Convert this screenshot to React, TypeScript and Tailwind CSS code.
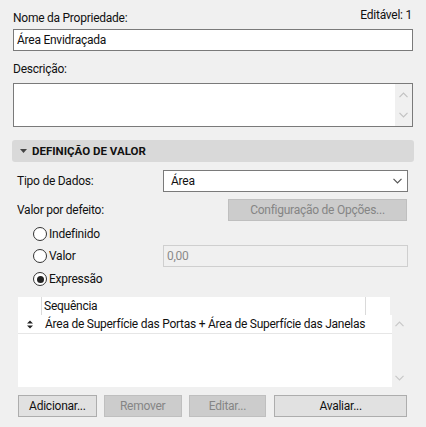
import React from "react";

const Chevron = ({ dir, color, className }: { dir: "up" | "down"; color: string; className?: string }) => (
  <svg width="9" height="6" viewBox="0 0 9 6" className={className}>
    {dir === "down" ? (
      <path d="M0.5 0.8 L4.5 4.8 L8.5 0.8" fill="none" stroke={color} strokeWidth="1.2" />
    ) : (
      <path d="M0.5 5.2 L4.5 1.2 L8.5 5.2" fill="none" stroke={color} strokeWidth="1.2" />
    )}
  </svg>
);

const Radio = ({ checked, label }: { checked?: boolean; label: string }) => (
  <div className="flex items-center gap-[2px]">
    <div className="w-[14px] h-[14px] rounded-full border border-[#333333] bg-white flex items-center justify-center">
      {checked && <div className="w-[7px] h-[7px] rounded-full bg-[#222222]" />}
    </div>
    <span>{label}</span>
  </div>
);

const Btn = ({ label, disabled, className }: { label: string; disabled?: boolean; className?: string }) => (
  <div
    className={
      "h-[22px] flex items-center justify-center border " +
      (disabled
        ? "bg-[#cccccc] border-[#bfbfbf] text-[#858585] "
        : "bg-[#e1e1e1] border-[#adadad] text-[#111111] ") +
      (className ?? "")
    }
  >
    {label}
  </div>
);

export default function App() {
  return (
    <div
      className="w-[426px] h-[427px] bg-[#f0f0f0] text-[12px] leading-[16px] tracking-[-0.25px] text-[#111111] overflow-hidden"
      style={{ fontFamily: "Roboto, 'Noto Sans', sans-serif" }}
    >
      <div className="px-[13px] pt-[7px]">
        <div className="flex justify-between items-start">
          <span className="mt-[3px]">Nome da Propriedade:</span>
          <span className="mr-[1px]">Editável: 1</span>
        </div>
        <div className="mt-[3px] h-[22px] bg-white border border-[#7a7a7a] flex items-center pl-[3px]">
          Área Envidraçada
        </div>
        <div className="mt-[10px]">Descrição:</div>
        <div className="mt-[6px] h-[44px] bg-white border border-[#7a7a7a] flex justify-end">
          <div className="w-[17px] bg-[#f0f0f0] flex flex-col items-center justify-between py-[8px]">
            <Chevron dir="up" color="#c2c2c2" />
            <Chevron dir="down" color="#c2c2c2" />
          </div>
        </div>
      </div>

      <div className="mx-[12px] mt-[13px] h-[22px] bg-[#d9d9d9] rounded-[3px] flex items-center pl-[8px]">
        <svg width="7" height="4" viewBox="0 0 7 4" className="mr-[5px]">
          <path d="M0 0 L7 0 L3.5 4 Z" fill="#444444" />
        </svg>
        <span className="font-bold text-[11.5px] tracking-normal text-[#111111]">DEFINIÇÃO DE VALOR</span>
      </div>

      <div className="pl-[17px] pr-[18px]">
        <div className="mt-[8px] h-[22px] flex items-center">
          <span className="w-[146px]">Tipo de Dados:</span>
          <div className="flex-1 h-[22px] bg-white border border-[#7a7a7a] flex items-center justify-between pl-[7px] pr-[5px]">
            <span>Área</span>
            <Chevron dir="down" color="#555555" />
          </div>
        </div>
        <div className="mt-[7px] h-[22px] flex items-center justify-between">
          <span>Valor por defeito:</span>
          <Btn label="Configuração de Opções..." disabled className="w-[179px] mr-[1px]" />
        </div>
        <div className="pl-[16px]">
          <div className="mt-[2px] h-[22px] flex items-center">
            <Radio label="Indefinido" />
          </div>
          <div className="h-[22px] flex items-center">
            <div className="w-[130px]">
              <Radio label="Valor" />
            </div>
            <div className="flex-1 h-[22px] border border-[#cfcfcf] bg-[#f0f0f0] flex items-center pl-[3px] text-[#8a8a8a]">
              0,00
            </div>
          </div>
          <div className="mt-[1px] h-[22px] flex items-center">
            <Radio checked label="Expressão" />
          </div>
        </div>
      </div>

      <div className="ml-[18px] mr-[19px] mt-[7px] h-[90px] flex">
        <div className="flex-1 flex flex-col">
          <div className="h-[18px] flex mr-[2px] bg-white">
            <div className="w-[24px] border-r border-[#dadada]" />
            <div className="flex-1 border-r border-[#dadada] pl-[2px] flex items-center">Sequência</div>
            <div className="w-[24px]" />
          </div>
          <div className="flex-1 bg-white">
            <div className="h-[19px] flex items-center border-b border-[#e6e6e6]">
              <div className="w-[24px] flex justify-center">
                <svg width="6" height="9" viewBox="0 0 6 9">
                  <path d="M0 3.5 L3 0.5 L6 3.5 Z M0 5.5 L3 8.5 L6 5.5 Z" fill="#222222" />
                </svg>
              </div>
              <span className="pl-[3px]">Área de Superfície das Portas + Área de Superfície das Janelas</span>
            </div>
          </div>
        </div>
        <div className="w-[15px] flex flex-col items-center justify-between pt-[24px] pb-[6px]">
          <Chevron dir="up" color="#c8c8c8" />
          <Chevron dir="down" color="#c8c8c8" />
        </div>
      </div>

      <div className="ml-[18px] mr-[19px] mt-[8px] flex gap-[7px]">
        <Btn label="Adicionar..." className="w-[79px]" />
        <Btn label="Remover" disabled className="w-[78px]" />
        <Btn label="Editar..." disabled className="w-[78px]" />
        <Btn label="Avaliar..." className="w-[133px] ml-[1px]" />
      </div>
    </div>
  );
}
